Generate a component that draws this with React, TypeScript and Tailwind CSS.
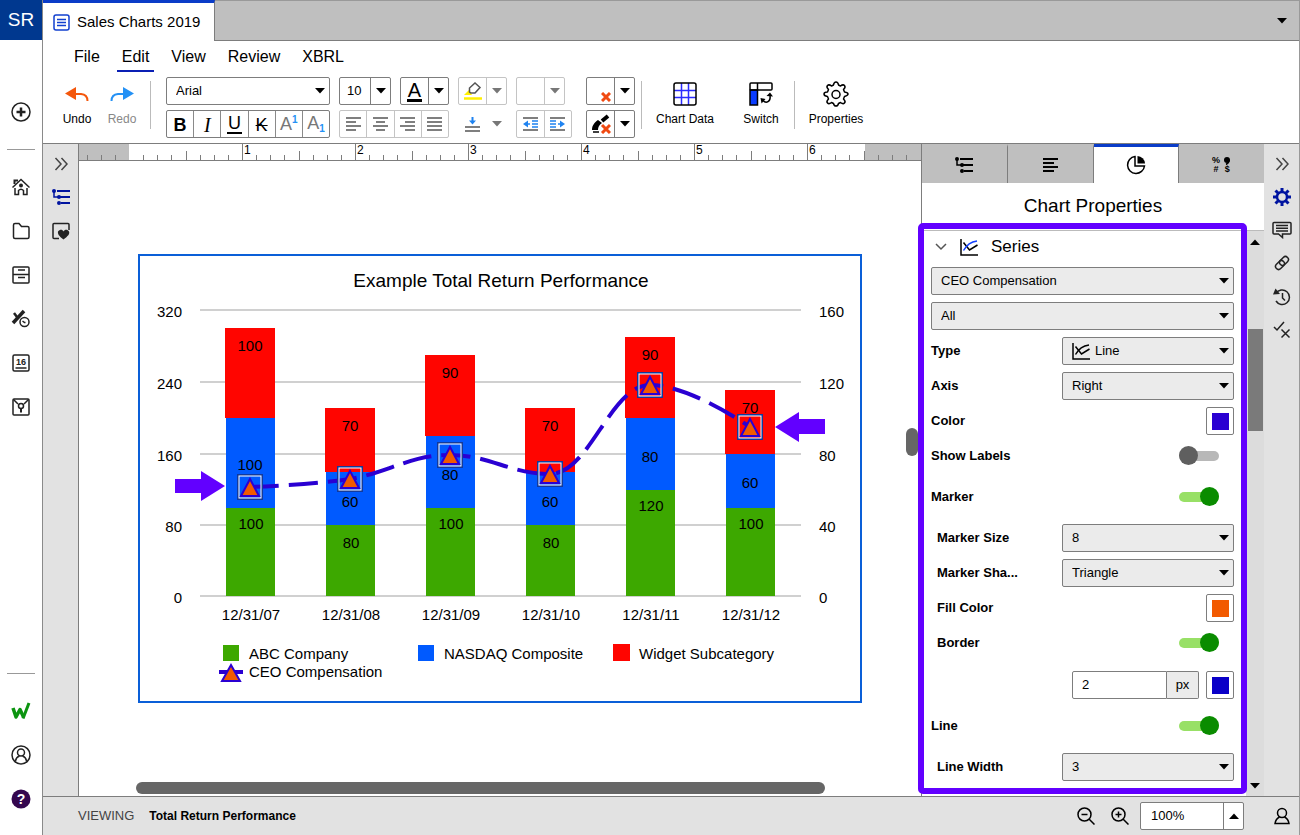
import { useState } from 'react'
import type { ReactNode } from 'react'
import clsx from 'clsx'

/* ---------- small shared pieces ---------- */

function Svg({ w, h, className, children }: { w: number; h: number; className?: string; children: ReactNode }) {
  return (
    <svg
      width={w}
      height={h}
      viewBox={`0 0 ${w} ${h}`}
      fill="none"
      stroke="currentColor"
      strokeWidth="1.5"
      aria-hidden="true"
      className={clsx('shrink-0', className)}
    >
      {children}
    </svg>
  )
}

function Caret({ up = false }: { up?: boolean }) {
  return (
    <Svg w={10} h={6}>
      <path d={up ? 'M0 6L5 0.5L10 6Z' : 'M0 0L5 5.5L10 0Z'} fill="currentColor" stroke="none" />
    </Svg>
  )
}

function Chevrons() {
  return (
    <Svg w={14} h={14} className="text-[#444]">
      <path d="M1.5 1L7 7L1.5 13M7.5 1L13 7L7.5 13" />
    </Svg>
  )
}

function OutlineIcon() {
  return (
    <Svg w={18} h={16}>
      <path d="M5 2H18M8 8H18M9 14H18" strokeWidth="2" />
      <path d="M2 2V8H6" />
      <g fill="currentColor" stroke="none">
        <circle cx="2" cy="2" r="2" />
        <circle cx="7" cy="8" r="2" />
        <circle cx="7" cy="14" r="2" />
      </g>
    </Svg>
  )
}

function LinesIcon({ color }: { color?: string }) {
  return (
    <Svg w={18} h={18}>
      <path d="M1 1V17H18" />
      <path d="M3.500 4.500L9.500 12L17.500 7" />
      <path d="M3.500 12.500C6 8 9 4 17 3" stroke={color || 'currentColor'} />
    </Svg>
  )
}

function RedX({ className }: { className?: string }) {
  return (
    <Svg w={10} h={10} className={className}>
      <path d="M1 1L9 9M9 1L1 9" stroke="#f04a12" strokeWidth="3" />
    </Svg>
  )
}

/* ---------- left rail ---------- */

const railItems = [
  {
    name: 'Home',
    icon: (
      <Svg w={20} h={20}>
        <path d="M1.500 10.500L10 2.500L18.500 10.500" />
        <path d="M3.500 7V3.500H7" strokeWidth="2" />
        <path d="M4 11V17.500H7.500V13.500Q10 11 12.500 13.500V17.500H16V11" />
        <circle cx="10" cy="8.500" r="2" fill="currentColor" stroke="none" />
      </Svg>
    ),
  },
  {
    name: 'Files',
    icon: (
      <Svg w={20} h={20}>
        <path d="M2.500 4Q2.500 2.500 4 2.500H8L10.500 5.500H16.500Q18 5.500 18 7V16Q18 17.500 16.500 17.500H4Q2.500 17.500 2.500 16Z" />
      </Svg>
    ),
  },
  {
    name: 'Drawers',
    icon: (
      <Svg w={20} h={20}>
        <rect x="2" y="2" width="16" height="16" rx="1" />
        <path d="M2 9.500H18M7 5H14M7 12.500H14" />
      </Svg>
    ),
  },
  {
    name: 'Tasks',
    icon: (
      <Svg w={20} h={20}>
        <path d="M3 4L6 8" strokeWidth="2.500" />
        <path d="M2 14L13 2" strokeWidth="3.500" />
        <circle cx="13.500" cy="13" r="4.500" fill="#fff" />
        <path d="M11.500 12L13.500 13.500H14.500" />
      </Svg>
    ),
  },
  {
    name: 'Calendar',
    icon: (
      <Svg w={20} h={20}>
        <rect x="2" y="2" width="16" height="16" rx="1.500" />
        <path d="M4.500 15H15.500" />
        <text x="10" y="12" textAnchor="middle" fontSize="9" fontWeight="bold" fill="currentColor" stroke="none">
          16
        </text>
      </Svg>
    ),
  },
  {
    name: 'Maps',
    icon: (
      <Svg w={20} h={20}>
        <rect x="2" y="2" width="16" height="16" rx="1" />
        <path d="M2.500 2.500L7 7M17.500 2.500L13 7" />
        <circle cx="10" cy="9" r="2.500" />
        <path d="M10 12V15.500" strokeWidth="2" />
      </Svg>
    ),
  },
]

function LeftRail() {
  return (
    <aside className="flex w-[43px] shrink-0 flex-col items-center border-r border-[#8a8a8a] bg-white text-[#222]">
      <div className="flex h-10 w-full items-center justify-center bg-[#00388f] text-[19px] text-white">SR</div>
      <button aria-label="Create" className="mt-[62px]">
        <Svg w={20} h={20}>
          <circle cx="10" cy="10" r="9" />
          <path d="M10 5.500V14.500M5.500 10H14.500" strokeWidth="2.500" />
        </Svg>
      </button>
      <hr className="my-[27px] w-7 border-[#999]" />
      <nav className="flex flex-col gap-6">
        {railItems.map((item) => (
          <button key={item.name} aria-label={item.name}>
            {item.icon}
          </button>
        ))}
      </nav>
      <hr className="mt-auto w-7 border-[#999]" />
      <div className="mt-[27px] mb-[26px] flex flex-col gap-6">
        <button aria-label="Workspace">
          <Svg w={20} h={20} className="text-[#0c9410]">
            <path d="M2 7L5 16L9 8.500L12.500 16" strokeWidth="3.500" strokeLinejoin="round" />
            <path d="M12 17.500L18 2" strokeWidth="3" />
          </Svg>
        </button>
        <button aria-label="Account">
          <Svg w={20} h={20}>
            <circle cx="10" cy="10" r="9" />
            <circle cx="10" cy="7.500" r="3.500" />
            <path d="M4.500 16C5 13 7 11.500 8.500 11M15.500 16C15 13 13 11.500 11.500 11" />
          </Svg>
        </button>
        <button aria-label="Help">
          <Svg w={20} h={20}>
            <circle cx="10" cy="10" r="9.500" fill="#35074f" stroke="none" />
            <text x="10" y="15" textAnchor="middle" fontSize="14" fontWeight="bold" fill="#fff" stroke="none">
              ?
            </text>
          </Svg>
        </button>
      </div>
    </aside>
  )
}

/* ---------- toolbar ---------- */

function SplitButton({ label, muted = false, children }: { label: string; muted?: boolean; children?: ReactNode }) {
  return (
    <div
      className={clsx(
        'flex h-7 w-[49px] rounded-[2px] border',
        muted ? 'border-[#c4c4c4] text-[#777]' : 'border-[#7d7d7d] text-black'
      )}
    >
      <button aria-label={label} className="flex flex-1 items-center justify-center">
        {children}
      </button>
      <button
        aria-label={`${label} options`}
        className={clsx('flex w-5 items-center justify-center border-l', muted ? 'border-[#c4c4c4]' : 'border-[#7d7d7d]')}
      >
        <Caret />
      </button>
    </div>
  )
}

const alignments = [
  { name: 'Align left', d: 'M0 1H15M0 5H10M0 9H15M0 13H10' },
  { name: 'Align center', d: 'M0 1H15M3 5H12M0 9H15M3 13H12' },
  { name: 'Align right', d: 'M0 1H15M5 5H15M0 9H15M5 13H15' },
  { name: 'Justify', d: 'M0 1H15M0 5H15M0 9H15M0 13H15' },
]

function Toolbar() {
  return (
    <div className="flex items-start pt-[5px] pb-[5px] text-xs">
      <button className="ml-[19px] flex w-[30px] flex-col items-center pt-[10px]">
        <Svg w={24} h={14} className="text-[#f4570c]">
          <path d="M10 7H16Q22.500 7.500 22.500 14" strokeWidth="2" />
          <path d="M0 6.500L11 0V13Z" fill="currentColor" stroke="none" />
        </Svg>
        <span className="mt-[10px] leading-4">Undo</span>
      </button>
      <button className="ml-[15px] flex w-[30px] flex-col items-center pt-[10px] text-[#888]">
        <Svg w={24} h={14} className="text-[#2491f5]">
          <path d="M14 7H8Q1.500 7.500 1.500 14" strokeWidth="2" />
          <path d="M24 6.500L13 0V13Z" fill="currentColor" stroke="none" />
        </Svg>
        <span className="mt-[10px] leading-4">Redo</span>
      </button>
      <div className="mt-1 ml-[13px] h-12 w-px bg-[#bbb]" />

      <div className="ml-[15px] flex flex-col gap-[5px]">
        <div className="flex">
          <div className="relative h-7 w-[164px]">
            <select aria-label="Font" className="h-full w-full appearance-none rounded-[2px] border border-[#7d7d7d] pl-[9px] text-[13px]">
              <option>Arial</option>
            </select>
            <span className="pointer-events-none absolute inset-y-0 right-[5px] flex items-center">
              <Caret />
            </span>
          </div>
          <div className="relative ml-[9px] h-7 w-[52px]">
            <select aria-label="Font size" className="h-full w-full appearance-none rounded-[2px] border border-[#7d7d7d] pl-[7px] text-[13px]">
              <option>10</option>
            </select>
            <span className="pointer-events-none absolute inset-y-0 right-0 flex w-[21px] items-center justify-center border-l border-[#7d7d7d]">
              <Caret />
            </span>
          </div>
          <div className="ml-[9px]">
            <SplitButton label="Text color">
              <span className="border-b-[3px] border-black px-px text-xl leading-[18px]">A</span>
            </SplitButton>
          </div>
          <div className="ml-[9px]">
            <SplitButton label="Highlight" muted>
              <Svg w={18} h={18}>
                <path d="M0 13L5 8L8 13Z" fill="#ffef00" stroke="none" />
                <path d="M5.500 10V6L11 1L16 5.500L11 11H7Z" stroke="#555" />
                <path d="M0 16.500H18" stroke="#ffef00" strokeWidth="2.500" />
              </Svg>
            </SplitButton>
          </div>
          <div className="ml-[9px]">
            <SplitButton label="Shading" muted />
          </div>
          <div className="ml-[21px]">
            <SplitButton label="Clear borders">
              <RedX className="mt-[11px] ml-[10px]" />
            </SplitButton>
          </div>
        </div>

        <div className="flex">
          <div className="flex h-7 w-[164px] divide-x divide-[#8a8a8a] rounded-[2px] border border-[#7d7d7d]">
            <button className="flex-1 text-lg font-bold">B</button>
            <button className="flex-1 font-['Liberation_Serif',serif] text-xl italic">I</button>
            <button className="flex flex-1 items-center justify-center text-lg leading-none">
              <span className="border-b-2 border-black px-px">U</span>
            </button>
            <button className="flex-1 text-lg line-through">K</button>
            <button aria-label="Superscript" className="flex flex-1 items-start justify-center pt-[3px] text-[#777]">
              <span className="text-lg leading-5">A</span>
              <span className="text-[10px] leading-3 font-bold text-[#2491f5]">1</span>
            </button>
            <button aria-label="Subscript" className="flex flex-1 items-end justify-center pb-[2px] text-[#777]">
              <span className="text-lg leading-6">A</span>
              <span className="text-[10px] leading-3 font-bold text-[#2491f5]">1</span>
            </button>
          </div>
          <div className="ml-[9px] flex h-7 w-[110px] divide-x divide-[#c4c4c4] rounded-[2px] border border-[#c4c4c4] text-[#555]">
            {alignments.map((a) => (
              <button key={a.name} aria-label={a.name} className="flex flex-1 items-center justify-center">
                <Svg w={15} h={14}>
                  <path d={a.d} />
                </Svg>
              </button>
            ))}
          </div>
          <div className="ml-[9px] flex h-7 w-[49px]">
            <button aria-label="Vertical align" className="flex flex-1 items-center justify-center text-[#555]">
              <Svg w={15} h={15}>
                <path d="M0 10H15M0 14H15" />
                <path d="M7.500 0V4" stroke="#1f83f0" strokeWidth="2" />
                <path d="M4 3.500H11L7.500 7.500Z" fill="#1f83f0" stroke="none" />
              </Svg>
            </button>
            <button aria-label="Vertical align options" className="flex w-[21px] items-center justify-center text-[#777]">
              <Caret />
            </button>
          </div>
          <div className="ml-[9px] flex h-7 w-[56px] divide-x divide-[#c4c4c4] rounded-[2px] border border-[#c4c4c4] text-[#555]">
            <button aria-label="Decrease indent" className="flex flex-1 items-center justify-center">
              <Svg w={15} h={14}>
                <path d="M0 1H15M0 13H15" />
                <path d="M3 7H7M9 4H15M9 7H15M9 10H15" stroke="#1f83f0" />
                <path d="M0 7L5 3.500V10.500Z" fill="#1f83f0" stroke="none" />
              </Svg>
            </button>
            <button aria-label="Increase indent" className="flex flex-1 items-center justify-center">
              <Svg w={15} h={14}>
                <path d="M0 1H15M0 13H15" />
                <path d="M8 7H12M0 4H6M0 7H6M0 10H6" stroke="#1f83f0" />
                <path d="M15 7L10 3.500V10.500Z" fill="#1f83f0" stroke="none" />
              </Svg>
            </button>
          </div>
          <div className="ml-[14px]">
            <SplitButton label="Clear formatting">
              <Svg w={20} h={20}>
                <path d="M1 16C1 11 4 8 7 6L11 9C8 11 7 13 7 16Z" fill="currentColor" stroke="none" />
                <path d="M11 7L17 2" strokeWidth="4" />
                <path d="M2 18H8" />
                <path d="M11 11L19 19M19 11L11 19" stroke="#f04a12" strokeWidth="3" />
              </Svg>
            </SplitButton>
          </div>
        </div>
      </div>

      <div className="mt-1 ml-[6px] h-12 w-px bg-[#bbb]" />
      <button className="ml-[13px] flex w-[60px] flex-col items-center pt-[5px]">
        <Svg w={24} h={24}>
          <path d="M8.500 1V23M15.500 1V23M1 8.500H23M1 15.500H23" stroke="#2b2bff" />
          <rect x="1" y="1" width="22" height="22" rx="2" />
        </Svg>
        <span className="mt-[5px] leading-4 whitespace-nowrap">Chart Data</span>
      </button>
      <button className="ml-[26px] flex w-10 flex-col items-center pt-[5px]">
        <Svg w={24} h={24}>
          <path d="M1 8H8.500V23H1Z" fill="#0a3cff" />
          <rect x="1" y="1" width="22" height="7" rx="1" />
          <path d="M8.500 1V8" />
          <path d="M14 18.500C17 22 22 20 21 13" />
          <path d="M17.500 14L21 10.500L24 14.500Z" fill="currentColor" stroke="none" />
          <path d="M11.500 16L16.500 17L12.500 21.500Z" fill="currentColor" stroke="none" />
        </Svg>
        <span className="mt-[5px] leading-4">Switch</span>
      </button>
      <div className="mt-1 ml-[13px] h-12 w-px bg-[#bbb]" />
      <button className="ml-[12px] flex w-[58px] flex-col items-center pt-1">
        <Svg w={28} h={26}>
          <path
            strokeLinejoin="round"
            d="M11.500 4Q12 1 14 1T16.500 4Q17.500 4.500 18.500 5Q21 3 22.500 4.500T21.500 8.500L22.500 11Q26 11.500 26 13T22.500 15.500L21.500 18Q24 20.500 22.500 22T18.500 21.500L16.500 22.500Q16 25 14 25T11.500 22.500L9.500 21.500Q7 23.500 5.500 22T6.500 18L5.500 15.500Q2 15 2 13T5.500 11L6.500 8.500Q4 6 5.500 4.500T9.500 5Z"
          />
          <circle cx="14" cy="13.500" r="4" />
        </Svg>
        <span className="mt-1 leading-4">Properties</span>
      </button>
    </div>
  )
}

function Header() {
  const menus = ['File', 'Edit', 'View', 'Review', 'XBRL']
  return (
    <header className="border-b border-[#7d7d7d]">
      <div className="flex h-[41px] bg-[#bfbfbf]">
        <div className="flex w-[172px] items-center gap-[7px] border-t-[3px] border-r border-t-[#0a3cc8] border-r-[#7d7d7d] bg-white pl-[10px] text-[15px]">
          <Svg w={17} h={17} className="text-[#1240d0]">
            <rect x="1" y="1" width="15" height="15" rx="2" />
            <path d="M4 5.500H13M4 8.500H13M4 11.500H13" />
          </Svg>
          Sales Charts 2019
        </div>
        <div className="flex flex-1 items-center justify-end border-t border-b border-t-[#999] border-b-[#7d7d7d] pr-3">
          <button aria-label="All tabs">
            <Caret />
          </button>
        </div>
      </div>
      <nav className="ml-[26px] flex h-[31px] gap-3 text-base">
        {menus.map((menu) => (
          <button
            key={menu}
            className={clsx('border-b-2 px-[5px] pt-[3px]', menu === 'Edit' ? 'border-[#0a1fb4]' : 'border-transparent')}
          >
            {menu}
          </button>
        ))}
      </nav>
      <Toolbar />
    </header>
  )
}

/* ---------- document area ---------- */

function Ruler() {
  const inch = 113
  const ticks = Array.from({ length: 60 }, (_, i) => i - 3).filter((i) => i !== 0)
  return (
    <div className="h-[17px] overflow-hidden border-b border-[#7d7d7d] bg-[#bfbfbf]">
      <svg width="842" height="16" viewBox="0 0 842 16" aria-hidden="true">
        <rect x="50" y="0" width="736" height="16" fill="#fff" />
        {ticks.map((i) => {
          const x = 50.5 + Math.round((i * inch) / 8)
          const height = i % 8 === 0 ? 16 : i % 4 === 0 ? 9 : 5
          return x < 838 && <path key={i} d={`M${x} ${16 - height}V16`} stroke="#7d7d7d" />
        })}
        {[1, 2, 3, 4, 5, 6].map((n) => (
          <text key={n} x={52 + n * inch} y="10" fontSize="12">
            {n}
          </text>
        ))}
      </svg>
    </div>
  )
}

const GREEN = '#3da800'
const BLUE = '#005aff'
const RED = '#ff0500'
const LINE = '#2a00d2'

const bars = [
  { date: '12/31/07', x: 112, abc: 100, nasdaq: 100, widget: 100, labels: [275, 216, 97], marker: 233 },
  { date: '12/31/08', x: 212, abc: 80, nasdaq: 60, widget: 70, labels: [294, 253, 177], marker: 225 },
  { date: '12/31/09', x: 312, abc: 100, nasdaq: 80, widget: 90, labels: [275, 226, 124], marker: 201 },
  { date: '12/31/10', x: 412, abc: 80, nasdaq: 60, widget: 70, labels: [294, 253, 177], marker: 220 },
  { date: '12/31/11', x: 512, abc: 120, nasdaq: 80, widget: 90, labels: [257, 208, 106], marker: 131 },
  { date: '12/31/12', x: 612, abc: 100, nasdaq: 60, widget: 70, labels: [275, 234, 159], marker: 173 },
]

const axis = [
  { y: 56, left: 320, right: 160 },
  { y: 128, left: 240, right: 120 },
  { y: 200, left: 160, right: 80 },
  { y: 271, left: 80, right: 40 },
  { y: 342, left: 0, right: 0 },
]

const scale = (v: number) => Math.round((v * 286) / 320)

function Chart() {
  return (
    <svg
      viewBox="0 0 724 449"
      className="block w-full"
      fontSize="15"
      role="img"
      aria-label="Example Total Return Performance"
    >
      <rect x="1" y="1" width="722" height="447" fill="#fff" stroke="#0a5fd8" strokeWidth="2" />
      <text x="363" y="33" textAnchor="middle" fontSize="19">
        Example Total Return Performance
      </text>

      {axis.map((a) => (
        <g key={a.y}>
          <path d={`M62 ${a.y}H663`} stroke="#d0d0d0" strokeWidth="2" />
          <text x="44" y={a.y + 7} textAnchor="end">
            {a.left}
          </text>
          <text x="681" y={a.y + 7}>
            {a.right}
          </text>
        </g>
      ))}

      {bars.map((b) => {
        const y1 = 343 - scale(b.abc)
        const y2 = 343 - scale(b.abc + b.nasdaq)
        const y3 = 342 - scale(b.abc + b.nasdaq + b.widget)
        return (
          <g key={b.date}>
            <rect x={b.x - 24} y={y1} width="49" height={342 - y1} fill={GREEN} />
            <rect x={b.x - 24} y={y2} width="49" height={y1 - y2} fill={BLUE} />
            <rect x={b.x - 25} y={y3} width="50" height={y2 - y3} fill={RED} />
            <text x={b.x + 1} y="366" textAnchor="middle">
              {b.date}
            </text>
          </g>
        )
      })}

      <path
        d="M112 233C112 233 172 231 212 225C252 218 272 201 312 201C352 201 372 220 412 220C452 220 472 131 512 131C552 131 612 173 612 173"
        fill="none"
        stroke={LINE}
        strokeWidth="4"
        strokeDasharray="29 10"
      />

      {bars.map((b) => (
        <g key={b.date} textAnchor="middle">
          <text x={b.x + 1} y={b.labels[0]}>
            {b.abc}
          </text>
          <text x={b.x} y={b.labels[1]}>
            {b.nasdaq}
          </text>
          <text x={b.x} y={b.labels[2]}>
            {b.widget}
          </text>
          <rect x={b.x - 12} y={b.marker - 12} width="24" height="24" fill="none" stroke="#123a9c" strokeWidth="2" />
          <rect x={b.x - 11} y={b.marker - 11} width="22" height="22" fill="none" stroke="#fff" />
          <path
            d={`M${b.x} ${b.marker - 8}L${b.x + 9} ${b.marker + 9}H${b.x - 9}Z`}
            fill="#f25a00"
            stroke={LINE}
            strokeWidth="2"
          />
        </g>
      ))}

      {/* callout arrows */}
      <path d="M37 225H63V217L87 232L63 247V239H37Z" fill="#6200ff" />
      <path d="M687 165H661V158L637 173L661 188V180H687Z" fill="#6200ff" />

      {/* legend */}
      <rect x="85" y="391" width="16" height="16" fill={GREEN} />
      <text x="111" y="405">ABC Company</text>
      <rect x="280" y="391" width="16" height="16" fill={BLUE} />
      <text x="306" y="405">NASDAQ Composite</text>
      <rect x="475" y="390" width="17" height="17" fill={RED} />
      <text x="501" y="405">Widget Subcategory</text>
      <path d="M81 418H105" stroke={LINE} strokeWidth="4" />
      <path d="M93 411L102 427H84Z" fill="#f25a00" stroke={LINE} strokeWidth="2" />
      <text x="111" y="423">CEO Compensation</text>
    </svg>
  )
}

function Document() {
  return (
    <main className="flex min-w-0 flex-1 flex-col bg-white">
      <Ruler />
      <div className="relative flex-1 px-[59px] pt-[93px]">
        <Chart />
        <div className="absolute top-[267px] right-[3px] h-7 w-3 rounded-full bg-[#666]" />
        <div className="absolute right-[96px] bottom-[2px] left-[57px] h-3 rounded-full bg-[#666]" />
      </div>
    </main>
  )
}

/* ---------- properties panel ---------- */

function Dropdown({ label, value, icon }: { label: string; value: string; icon?: ReactNode }) {
  return (
    <div className="relative h-7 w-full">
      <select
        aria-label={label}
        className={clsx(
          'h-full w-full appearance-none rounded-[2px] border border-[#7d7d7d] bg-[#ebebeb] text-[13px]',
          icon ? 'pl-8' : 'pl-[9px]'
        )}
      >
        <option>{value}</option>
      </select>
      {icon && <span className="pointer-events-none absolute inset-y-0 left-[10px] flex items-center">{icon}</span>}
      <span className="pointer-events-none absolute inset-y-0 right-[5px] flex items-center">
        <Caret />
      </span>
    </div>
  )
}

function Row({ label, indent, tall, children }: { label: string; indent?: boolean; tall?: boolean; children: ReactNode }) {
  return (
    <div className={clsx('flex items-center', tall ? 'h-10' : 'h-7', indent && 'pl-[6px]')}>
      <span className="min-w-0 flex-1 text-[13px] font-bold">{label}</span>
      {children}
    </div>
  )
}

function Toggle({ label, initial }: { label: string; initial: boolean }) {
  const [on, setOn] = useState(initial)
  return (
    <input
      type="checkbox"
      role="switch"
      aria-label={label}
      checked={on}
      onChange={() => setOn(!on)}
      className="relative mr-[15px] h-[10px] w-10 appearance-none rounded-full bg-[#b8b8b8] before:absolute before:-top-[5px] before:left-0 before:size-[19px] before:rounded-full before:bg-[#5f5f5f] before:content-[''] checked:bg-[#98e066] checked:before:left-[21px] checked:before:bg-[#0a8c00]"
    />
  )
}

function Swatch({ label, className }: { label: string; className: string }) {
  return (
    <button aria-label={label} className="flex size-7 items-center justify-center rounded-[2px] border border-[#7d7d7d] bg-white">
      <span className={clsx('size-[17px]', className)} />
    </button>
  )
}

function PropertiesPanel() {
  const tabs = [
    { name: 'Outline', icon: <OutlineIcon /> },
    {
      name: 'Paragraph',
      icon: (
        <Svg w={15} h={14}>
          <path d="M0 1H15M0 5H11M0 9H15M0 13H11" strokeWidth="2" />
        </Svg>
      ),
    },
    {
      name: 'Chart',
      icon: (
        <Svg w={20} h={20}>
          <path d="M9 1.500A8.500 8.500 0 1 0 18.500 11H9Z" />
          <path d="M11.500 1A8 8 0 0 1 19 8.500H11.500Z" fill="currentColor" stroke="none" />
        </Svg>
      ),
    },
    {
      name: 'Number format',
      icon: (
        <span className="grid grid-cols-2 place-items-center gap-x-[3px] text-[9px] leading-[9px] font-bold">
          <span>%</span>
          <Svg w={6} h={8}>
            <circle cx="3" cy="3" r="3" fill="currentColor" stroke="none" />
            <path d="M5 3Q5 6 2 7.500" />
          </Svg>
          <span>#</span>
          <span>$</span>
        </span>
      ),
    },
  ]
  return (
    <section className="relative flex w-[343px] shrink-0 flex-col border-l border-[#7d7d7d] bg-white">
      <div className="flex h-[39px] divide-x divide-[#7d7d7d]" role="tablist">
        {tabs.map((tab) => (
          <button
            key={tab.name}
            role="tab"
            aria-label={tab.name}
            aria-selected={tab.name === 'Chart'}
            className={clsx(
              'flex flex-1 items-center justify-center border-t-[3px]',
              tab.name === 'Chart' ? 'border-t-[#0a3cc8] bg-white' : 'border-t-[#bfbfbf] bg-[#bfbfbf]'
            )}
          >
            {tab.icon}
          </button>
        ))}
      </div>
      <h2 className="flex h-[48px] items-center justify-center border-b border-[#bbb] text-[19px]">Chart Properties</h2>

      <div className="flex min-h-0 flex-1">
        <div className="min-w-0 flex-1 overflow-hidden pr-3 pl-[9px]">
          <button className="flex h-8 items-center text-[17px]">
            <Svg w={12} h={8} className="mr-[13px] ml-[4px] text-[#555]">
              <path d="M1 1L6 6L11 1" />
            </Svg>
            <LinesIcon color="#1240ff" />
            <span className="ml-[13px]">Series</span>
          </button>
          <div className="mt-1 flex flex-col gap-[7px]">
            <Dropdown label="Series" value="CEO Compensation" />
            <Dropdown label="Points" value="All" />
            <Row label="Type">
              <div className="w-[172px]">
                <Dropdown label="Type" value="Line" icon={<LinesIcon />} />
              </div>
            </Row>
            <Row label="Axis">
              <div className="w-[172px]">
                <Dropdown label="Axis" value="Right" />
              </div>
            </Row>
            <Row label="Color">
              <Swatch label="Color" className="bg-[#2a00d2]" />
            </Row>
            <Row label="Show Labels">
              <Toggle label="Show Labels" initial={false} />
            </Row>
            <Row label="Marker" tall>
              <Toggle label="Marker" initial />
            </Row>
            <Row label="Marker Size" indent>
              <div className="w-[172px]">
                <Dropdown label="Marker Size" value="8" />
              </div>
            </Row>
            <Row label="Marker Sha..." indent>
              <div className="w-[172px]">
                <Dropdown label="Marker Shape" value="Triangle" />
              </div>
            </Row>
            <Row label="Fill Color" indent>
              <Swatch label="Fill Color" className="bg-[#f25a00]" />
            </Row>
            <Row label="Border" indent>
              <Toggle label="Border" initial />
            </Row>
            <div className="mt-[7px] flex h-7 justify-end">
              <input
                aria-label="Border width"
                defaultValue="2"
                className="w-[95px] rounded-l-[2px] border border-[#7d7d7d] pl-[9px] text-[13px]"
              />
              <span className="mr-[7px] flex w-8 items-center justify-center rounded-r-[2px] border border-l-0 border-[#7d7d7d] bg-[#ebebeb] text-[13px]">
                px
              </span>
              <Swatch label="Border color" className="bg-[#0a00c8]" />
            </div>
            <Row label="Line" tall>
              <Toggle label="Line" initial />
            </Row>
            <Row label="Line Width" indent>
              <div className="w-[172px]">
                <Dropdown label="Line Width" value="3" />
              </div>
            </Row>
          </div>
        </div>
        <div className="flex w-[18px] flex-col items-center bg-[#dcdcdc] pt-[8px] pb-[7px]">
          <Caret up />
          <div className="mt-[84px] h-[102px] w-[15px] bg-[#7a7a7a]" />
          <div className="mt-auto">
            <Caret />
          </div>
        </div>
      </div>

      {/* highlighted region */}
      <div className="pointer-events-none absolute top-[79px] right-[17px] bottom-[2px] -left-1 rounded-[5px] border-[6px] border-[#6200ff]" />
    </section>
  )
}

function RightRail() {
  return (
    <aside className="flex w-[35px] shrink-0 flex-col items-center bg-[#e2e2e2] pt-[13px] text-[#222]">
      <button aria-label="Collapse">
        <Chevrons />
      </button>
      <button aria-label="Settings" className="mt-[17px]">
        <Svg w={18} h={18} className="text-[#0014a0]">
          <circle cx="9" cy="9" r="5" strokeWidth="2.500" />
          <path
            d="M9 0V3.500M9 14.500V18M0 9H3.500M14.500 9H18M2.500 2.500L5.500 5.500M12.500 12.500L15.500 15.500M15.500 2.500L12.500 5.500M2.500 15.500L5.500 12.500"
            strokeWidth="3"
          />
        </Svg>
      </button>
      <button aria-label="Comments" className="mt-[15px]">
        <Svg w={20} h={18}>
          <path d="M2 1.500H18Q19 1.500 19 2.500V12Q19 13 18 13H10.500V16.500L6.500 13H2Q1 13 1 12V2.500Q1 1.500 2 1.500Z" />
          <path d="M4 4.500H16M4 7.250H16M4 10H16" />
        </Svg>
      </button>
      <button aria-label="Links" className="mt-[16px]">
        <Svg w={16} h={16}>
          <rect x="-5" y="-3" width="10" height="6" rx="3" transform="translate(10 6) rotate(-45)" />
          <rect x="-5" y="-3" width="10" height="6" rx="3" transform="translate(6 10) rotate(-45)" />
        </Svg>
      </button>
      <button aria-label="History" className="mt-[17px]">
        <Svg w={18} h={18}>
          <path d="M3 5.500A7.250 7.250 0 1 1 3 13" />
          <path d="M0 6.500L2.500 0.500L7 6Z" fill="currentColor" stroke="none" />
          <path d="M9.500 5V10L12 12.500" />
        </Svg>
      </button>
      <button aria-label="Checks" className="mt-[15px]">
        <Svg w={18} h={18}>
          <path d="M1 6L4 9L11 1M8.500 8.500L16.500 16.500M16.500 8.500L8.500 16.500" />
        </Svg>
      </button>
    </aside>
  )
}

function StatusBar() {
  return (
    <footer className="flex h-[39px] shrink-0 items-center border-t border-[#7d7d7d] bg-[#e2e2e2] pr-[9px] pl-[35px] text-[13px]">
      <span className="text-[#444]">VIEWING</span>
      <span className="ml-[15px] text-xs font-bold">Total Return Performance</span>
      <button aria-label="Zoom out" className="ml-auto">
        <Svg w={18} h={18}>
          <circle cx="7.500" cy="7.500" r="6.500" />
          <path d="M4.500 7.500H10.500M12 12L17.500 17.500" />
        </Svg>
      </button>
      <button aria-label="Zoom in" className="ml-4">
        <Svg w={18} h={18}>
          <circle cx="7.500" cy="7.500" r="6.500" />
          <path d="M4.500 7.500H10.500M7.500 4.500V10.500M12 12L17.500 17.500" />
        </Svg>
      </button>
      <div className="ml-[11px] flex h-7 w-[104px] rounded-[2px] border border-[#7d7d7d] bg-white">
        <input aria-label="Zoom" defaultValue="100%" className="w-full min-w-0 flex-1 pl-[10px]" />
        <button aria-label="Zoom options" className="flex w-5 items-center justify-center border-l border-[#7d7d7d]">
          <Caret up />
        </button>
      </div>
      <button aria-label="Users" className="ml-[30px]">
        <Svg w={16} h={18}>
          <circle cx="8" cy="6" r="4.500" />
          <path d="M5.500 10C2.500 11.500 1.500 13.500 1 16.500H15C14.500 13.500 13.500 11.500 10.500 10" />
        </Svg>
      </button>
    </footer>
  )
}

export default function App() {
  return (
    <div className="flex h-screen min-h-[600px] bg-white font-['Liberation_Sans',Arial,sans-serif] text-black">
      <LeftRail />
      <div className="flex min-w-0 flex-1 flex-col border-r border-[#999]">
        <Header />
        <div className="flex min-h-0 flex-1">
          <aside className="flex w-9 shrink-0 flex-col items-center border-r border-[#7d7d7d] bg-[#e2e2e2] pt-[13px]">
            <button aria-label="Expand">
              <Chevrons />
            </button>
            <button aria-label="Outline" className="mt-[18px] text-[#0014a0]">
              <OutlineIcon />
            </button>
            <button aria-label="Favorites" className="mt-[17px]">
              <Svg w={18} h={18} className="text-[#222]">
                <path d="M7 16.500H2Q1 16.500 1 15.500V2.500Q1 1.500 2 1.500H16Q17 1.500 17 2.500V8" />
                <path
                  d="M11.500 17.500C7 14 5.500 12 6 9.500C8 7 10.500 7.500 11.500 9.500C12.500 7.500 15.500 7 17 9.500C18 12 16 14 11.500 17.500Z"
                  fill="currentColor"
                  stroke="none"
                />
              </Svg>
            </button>
          </aside>
          <Document />
          <PropertiesPanel />
          <RightRail />
        </div>
        <StatusBar />
      </div>
    </div>
  )
}
